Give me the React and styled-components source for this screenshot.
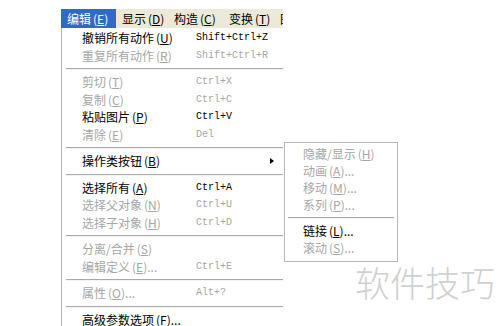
import React from 'react';
import styled, { createGlobalStyle } from 'styled-components';

const GlobalStyle = createGlobalStyle`
    html, body {
        margin: 0;
        padding: 0;
        background: #fff;
        overflow: hidden;
    }
    body {
        font-family: "Noto Sans CJK SC", "Liberation Sans", sans-serif;
        font-size: 12px;
    }
`

const Page = styled.div`
    position: relative;
    width: 500px;
    height: 326px;
    box-sizing: border-box;
    padding: 9px 0 0 61px;
    overflow: hidden;
`

const MenuBar = styled.div`
    display: flex;
    width: 222px;
    height: 19px;
    background: #ece9d8;
    overflow: hidden;
`

const BarItem = styled.div`
    flex: none;
    display: flex;
    align-items: center;
    width: ${p => p.$w}px;
    height: 19px;
    padding-left: 6px;
    box-sizing: border-box;
    white-space: nowrap;
    background: ${p => p.$active ? '#316ac5' : 'transparent'};
    color: ${p => p.$active ? '#fff' : '#000'};
    line-height: 1;
`

const Menu = styled.div`
    width: 222px;
    border-left: 1px solid #b4b4b4;
    padding-top: 1.5px;
    background: #fff;
`

const Row = styled.div`
    position: relative;
    display: grid;
    grid-template-columns: 114px 1fr 14px;
    align-items: center;
    height: 17.5px;
    padding-left: 20px;
    color: ${p => p.$off ? '#a6a6a6' : '#000'};
    white-space: nowrap;
    line-height: 1;
`

const Key = styled.span`
    font-family: "Liberation Mono", monospace;
    font-size: 10px;
`

const Paren = styled.span`
    margin-left: 2px;
`

const Sep = styled.div`
    height: 9px;
    display: flex;
    align-items: center;
    margin: 0 ${p => p.$r || 0}px 0 ${p => p.$l || 4}px;

    &::after {
        content: "";
        flex: 1;
        border-top: 1px solid #a9a9a9;
        border-bottom: 1px solid #f4f4f4;
    }
`

const Arrow = styled.span`
    width: 0;
    height: 0;
    border-top: 3.5px solid transparent;
    border-bottom: 3.5px solid transparent;
    border-left: 4px solid #000;
`

const SubMenu = styled.div`
    position: absolute;
    left: 222px;
    top: -11px;
    width: 114px;
    box-sizing: border-box;
    padding: 3px 0 4px;
    border: 1px solid #b8b8b8;
    background: #fff;
`

const SubRow = styled.div`
    display: flex;
    align-items: center;
    height: 17px;
    padding-left: 18px;
    color: ${p => p.$off ? '#a6a6a6' : '#000'};
    white-space: nowrap;
    line-height: 1;
`

const Watermark = styled.div`
    position: absolute;
    left: 355px;
    top: 264px;
    font-size: 35px;
    font-weight: 300;
    color: #d0d0d0;
    line-height: 1;
    white-space: nowrap;
`

const M = ({ k }) => <Paren>(<u>{k}</u>)</Paren>

const items = [
    { t: '撤销所有动作', k: 'U', key: 'Shift+Ctrl+Z' },
    { t: '重复所有动作', k: 'R', key: 'Shift+Ctrl+R', off: true },
    'sep',
    { t: '剪切', k: 'T', key: 'Ctrl+X', off: true },
    { t: '复制', k: 'C', key: 'Ctrl+C', off: true },
    { t: '粘贴图片', k: 'P', key: 'Ctrl+V' },
    { t: '清除', k: 'E', key: 'Del', off: true },
    'sep',
    { t: '操作类按钮', k: 'B', sub: true },
    'sep',
    { t: '选择所有', k: 'A', key: 'Ctrl+A' },
    { t: '选择父对象', k: 'N', key: 'Ctrl+U', off: true },
    { t: '选择子对象', k: 'H', key: 'Ctrl+D', off: true },
    'sep',
    { t: '分离/合并', k: 'S', off: true },
    { t: '编辑定义', k: 'E', dots: true, key: 'Ctrl+E', off: true },
    'sep',
    { t: '属性', k: 'O', dots: true, key: 'Alt+?', off: true },
    'sep',
    { t: '高级参数选项', k: 'F', dots: true },
]

const subItems = [
    { t: '隐藏/显示', k: 'H', off: true },
    { t: '动画', k: 'A', dots: true, off: true },
    { t: '移动', k: 'M', dots: true, off: true },
    { t: '系列', k: 'P', dots: true, off: true },
    'sep',
    { t: '链接', k: 'L', dots: true },
    { t: '滚动', k: 'S', dots: true, off: true },
]

export default function App() {
    return (
        <Page>
            <GlobalStyle />
            <MenuBar>
                <BarItem $w={55} $active>编辑<M k="E" /></BarItem>
                <BarItem $w={52}>显示<M k="D" /></BarItem>
                <BarItem $w={55}>构造<M k="C" /></BarItem>
                <BarItem $w={51}>变换<M k="T" /></BarItem>
                <BarItem $w={40}>图层</BarItem>
            </MenuBar>
            <Menu>
                {items.map((it, i) => it === 'sep' ? (
                    <Sep key={i} $l={4} $r={1} />
                ) : (
                    <Row key={i} $off={it.off}>
                        <span>{it.t}<M k={it.k} />{it.dots && '...'}</span>
                        <Key>{it.key}</Key>
                        {it.sub && <Arrow />}
                        {it.sub && (
                            <SubMenu>
                                {subItems.map((s, j) => s === 'sep' ? (
                                    <Sep key={j} $l={3} $r={3} />
                                ) : (
                                    <SubRow key={j} $off={s.off}>
                                        {s.t}<M k={s.k} />{s.dots && '...'}
                                    </SubRow>
                                ))}
                            </SubMenu>
                        )}
                    </Row>
                ))}
            </Menu>
            <Watermark>软件技巧</Watermark>
        </Page>
    )
}
